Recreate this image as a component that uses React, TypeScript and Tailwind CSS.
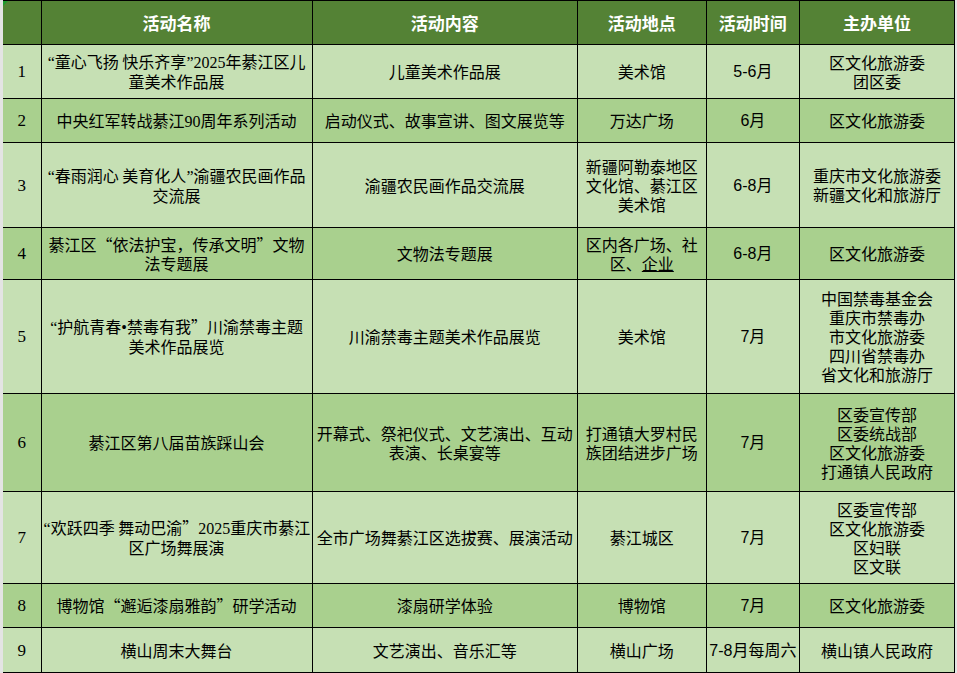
import React from 'react'

type Row = {
  no: string
  name: React.ReactNode
  content: React.ReactNode
  place: React.ReactNode
  time: React.ReactNode
  host: React.ReactNode
  h: number
}

const serif = 'font-["Liberation_Serif","Noto_Sans_CJK_SC",serif]'

// narrow western-style quote marks, as in the sheet
const Q = ({ c }: { c: string }) => <span className={serif}>{c}</span>

const rows: Row[] = [
  {
    no: '1',
    name: (<><Q c="“" />童心飞扬 快乐齐享<Q c="”" /><span className={serif}>2025</span>年綦江区儿<br />童美术作品展</>),
    content: '儿童美术作品展',
    place: '美术馆',
    time: '5-6月',
    host: (<>区文化旅游委<br />团区委</>),
    h: 54,
  },
  {
    no: '2',
    name: (<>中央红军转战綦江<span className={serif}>90</span>周年系列活动</>),
    content: '启动仪式、故事宣讲、图文展览等',
    place: '万达广场',
    time: '6月',
    host: '区文化旅游委',
    h: 44,
  },
  {
    no: '3',
    name: (<><Q c="“" />春雨润心 美育化人<Q c="”" />渝疆农民画作品<br />交流展</>),
    content: '渝疆农民画作品交流展',
    place: (<>新疆阿勒泰地区<br />文化馆、綦江区<br />美术馆</>),
    time: '6-8月',
    host: (<>重庆市文化旅游委<br />新疆文化和旅游厅</>),
    h: 85,
  },
  {
    no: '4',
    name: (<>綦江区“依法护宝，传承文明”文物<br />法专题展</>),
    content: '文物法专题展',
    place: (<>区内各广场、社<br />区、<span className="underline">企业</span></>),
    time: '6-8月',
    host: '区文化旅游委',
    h: 52,
  },
  {
    no: '5',
    name: (<><Q c="“" />护航青春<Q c="•" />禁毒有我”川渝禁毒主题<br />美术作品展览</>),
    content: '川渝禁毒主题美术作品展览',
    place: '美术馆',
    time: '7月',
    host: (<>中国禁毒基金会<br />重庆市禁毒办<br />市文化旅游委<br />四川省禁毒办<br />省文化和旅游厅</>),
    h: 114,
  },
  {
    no: '6',
    name: '綦江区第八届苗族踩山会',
    content: (<>开幕式、祭祀仪式、文艺演出、互动<br />表演、长桌宴等</>),
    place: (<>打通镇大罗村民<br />族团结进步广场</>),
    time: '7月',
    host: (<>区委宣传部<br />区委统战部<br />区文化旅游委<br />打通镇人民政府</>),
    h: 98,
  },
  {
    no: '7',
    name: (<><Q c="“" />欢跃四季 舞动巴渝”<span className={serif}>2025</span>重庆市綦江<br />区广场舞展演</>),
    content: '全市广场舞綦江区选拔赛、展演活动',
    place: '綦江城区',
    time: '7月',
    host: (<>区委宣传部<br />区文化旅游委<br />区妇联<br />区文联</>),
    h: 92,
  },
  {
    no: '8',
    name: '博物馆“邂逅漆扇雅韵”研学活动',
    content: '漆扇研学体验',
    place: '博物馆',
    time: '7月',
    host: '区文化旅游委',
    h: 44,
  },
  {
    no: '9',
    name: '横山周末大舞台',
    content: '文艺演出、音乐汇等',
    place: '横山广场',
    time: '7-8月每周六',
    host: '横山镇人民政府',
    h: 45,
  },
]

const headers = ['', '活动名称', '活动内容', '活动地点', '活动时间', '主办单位']
const widths = [38, 271, 265, 129, 93, 155]

export default function App() {
  return (
    <div className='w-[957px] h-[673px] overflow-hidden bg-[#e4e4e4] pl-[3px] relative font-["Noto_Sans_CJK_SC",sans-serif] text-[16px] leading-[19px] text-black'>
      <div className="absolute left-[3px] top-[1px] w-0 h-0 border-t-[5px] border-r-[5px] border-t-[#1f9a2e] border-r-transparent z-10" />
      <table className="table-fixed border-collapse w-[952px]">
        <colgroup>
          {widths.map((w, i) => (
            <col key={i} style={{ width: w }} />
          ))}
        </colgroup>
        <thead>
          <tr className="h-[44px] bg-[#548235]">
            {headers.map((h, i) => (
              <th
                key={i}
                className={`border border-black text-white font-bold text-[17px] text-center align-middle p-0 ${i === 0 ? 'border-l-0' : ''}`}
              >
                {h}
              </th>
            ))}
          </tr>
        </thead>
        <tbody>
          {rows.map((r, idx) => (
            <tr
              key={r.no}
              style={{ height: r.h }}
              className={idx % 2 === 0 ? 'bg-[#c6e0b4]' : 'bg-[#a9d08e]'}
            >
              <td className={`border border-black border-l-0 text-center align-middle p-0 text-[17px] ${serif}`}>
                {r.no}
              </td>
              <td className="border border-black text-center align-middle px-[2px] py-0 whitespace-nowrap">
                {r.name}
              </td>
              <td className="border border-black text-center align-middle px-[2px] py-0 whitespace-nowrap">
                {r.content}
              </td>
              <td className="border border-black text-center align-middle px-[2px] py-0 whitespace-nowrap">
                {r.place}
              </td>
              <td className='border border-black text-center align-middle p-0 whitespace-nowrap font-["Liberation_Sans","Noto_Sans_CJK_SC",sans-serif]'>
                {r.time}
              </td>
              <td className="border border-black text-center align-middle px-[2px] py-0 whitespace-nowrap">
                {r.host}
              </td>
            </tr>
          ))}
        </tbody>
      </table>
    </div>
  )
}
